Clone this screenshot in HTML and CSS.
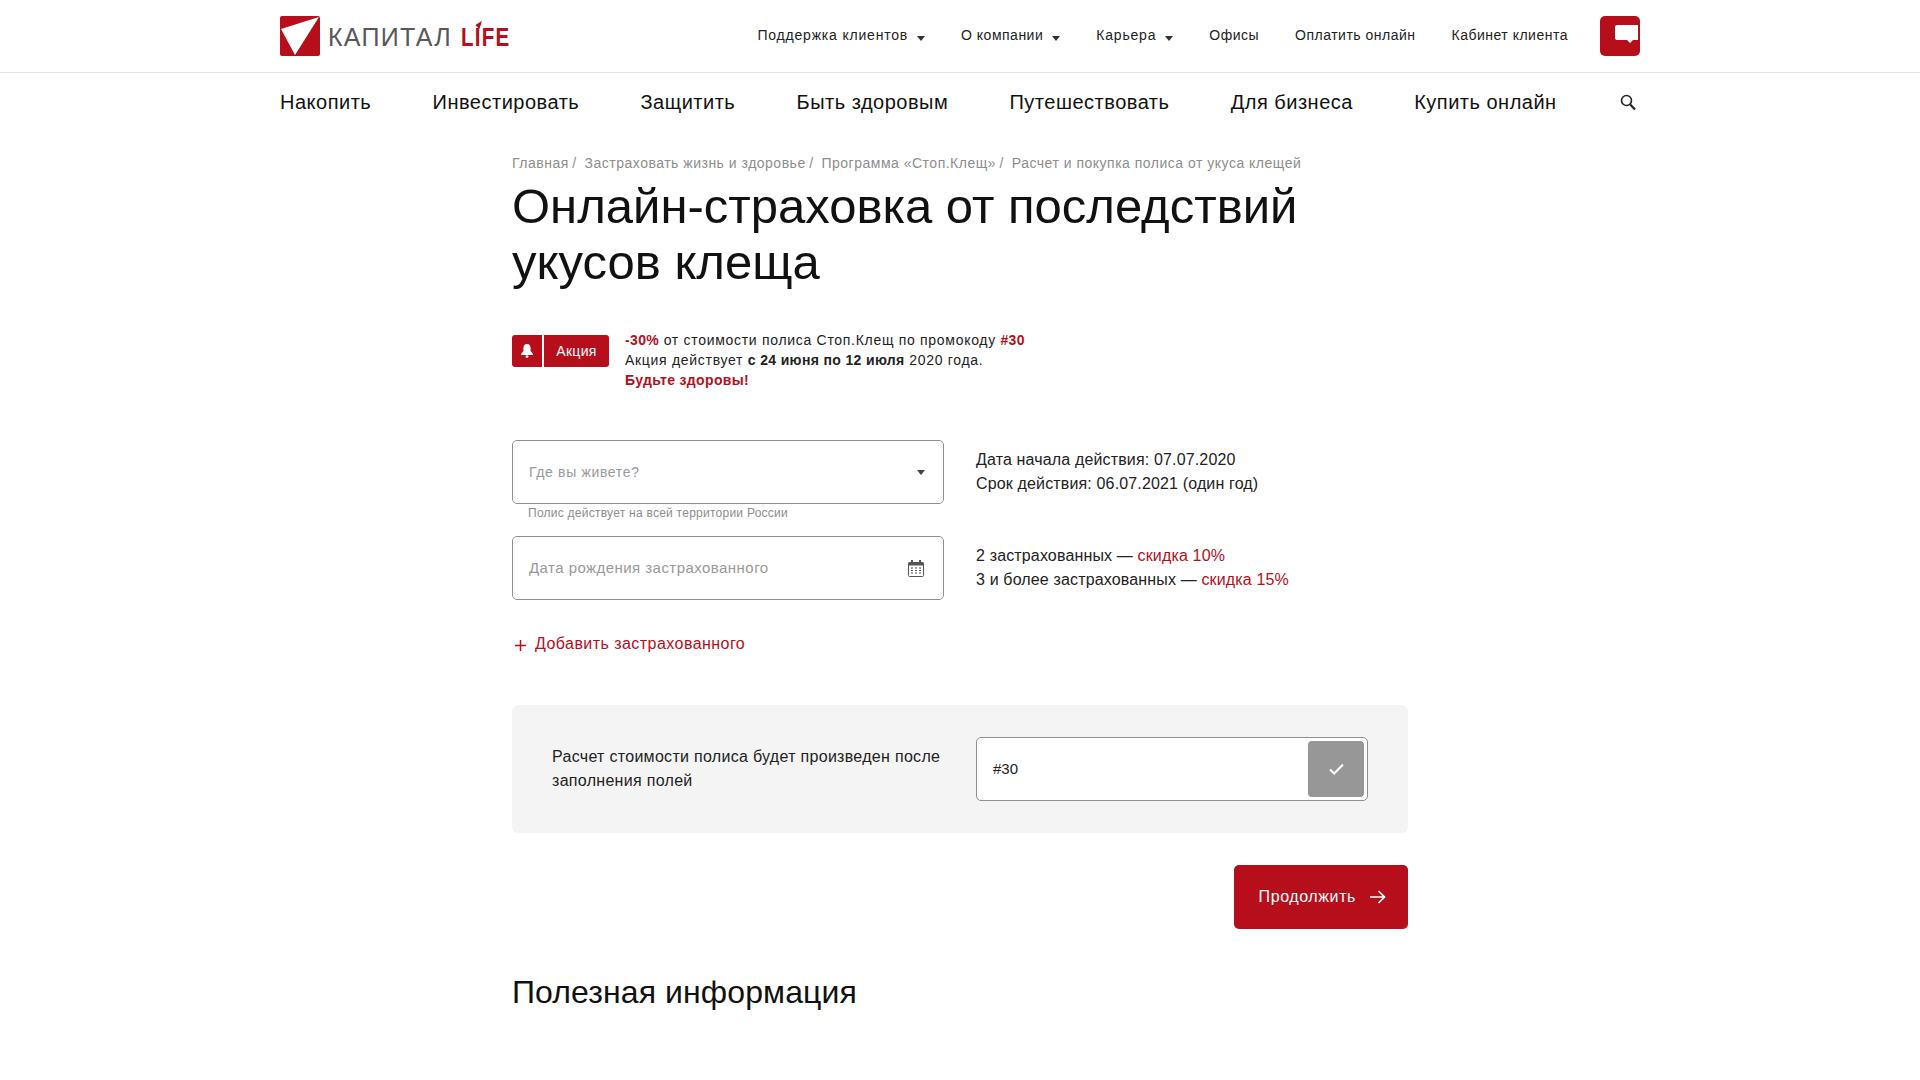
FILE: index.html
```html
<!DOCTYPE html>
<html lang="ru">
    <head>
        <meta charset="UTF-8" />
        <meta name="viewport" content="width=device-width, initial-scale=1.0" />
        <title>Онлайн-страховка от последствий укусов клеща</title>
        <link rel="stylesheet" href="styles.css">
    </head>
    <body>
        <header class="topbar">
            <div class="wrap topbar-row">
                <a class="logo" href="#">
                    <svg class="logo-mark" width="40" height="40" viewBox="0 0 40 40">
                        <rect width="40" height="40" rx="2" fill="#b60e1b" />
                        <path d="M1 13 L39 1 L15 39 Z" fill="#fff" />
                    </svg>
                    <span class="logo-name">КАПИТАЛ</span>
                    <span class="logo-life">L<span class="logo-i">I<svg class="logo-flag" width="9" height="8" viewBox="0 0 8 8"><path d="M0 4 L8 0 L5 8 Z" fill="#b60e1b" /></svg></span>FE</span>
                </a>
                <nav class="topnav">
                    <a href="#" class="has-caret wide">Поддержка клиентов</a>
                    <a href="#" class="has-caret">О компании</a>
                    <a href="#" class="has-caret wide">Карьера</a>
                    <a href="#">Офисы</a>
                    <a href="#">Оплатить онлайн</a>
                    <a href="#">Кабинет клиента</a>
                </nav>
                <a class="chat-btn" href="#">
                    <svg width="23" height="20" viewBox="0 0 23 20">
                        <path d="M2 0 H23 V15 H18 L15 18 L12 15 H2 Q0 15 0 13 V2 Q0 0 2 0 Z" fill="#fff" />
                    </svg>
                </a>
            </div>
        </header>

        <nav class="mainnav">
            <div class="wrap mainnav-row">
                <a href="#">Накопить</a>
                <a href="#">Инвестировать</a>
                <a href="#">Защитить</a>
                <a href="#">Быть здоровым</a>
                <a href="#">Путешествовать</a>
                <a href="#">Для бизнеса</a>
                <a href="#">Купить онлайн</a>
                <a href="#" class="search-link">
                    <svg width="16" height="17" viewBox="0 0 16 17">
                        <circle cx="6.5" cy="6.5" r="5" fill="none" stroke="#222" stroke-width="1.6" />
                        <path d="M10.2 10.5 L15 15.5" stroke="#222" stroke-width="2.2" />
                    </svg>
                </a>
            </div>
        </nav>

        <main class="content">
            <div class="crumbs">
                <a href="#">Главная</a><span>/</span>
                <a href="#">Застраховать жизнь и здоровье</a><span>/</span>
                <a href="#">Программа «Стоп.Клещ»</a><span>/</span>
                <a href="#">Расчет и покупка полиса от укуса клещей</a>
            </div>
            <h1>Онлайн-страховка от последствий укусов клеща</h1>

            <section class="promo">
                <div class="promo-tag">
                    <span class="promo-icon">
                        <svg width="12" height="14" viewBox="0 0 12 14">
                            <path d="M6 0 C8.6 0 9.6 2 9.6 4.5 V7 L12 10 V11 H0 V10 L2.4 7 V4.5 C2.4 2 3.4 0 6 0 Z" fill="#fff" />
                            <circle cx="6" cy="12.6" r="1.4" fill="#fff" />
                        </svg>
                    </span>
                    <span class="promo-label">Акция</span>
                </div>
                <div class="promo-text">
                    <p><b class="red">-30%</b> от стоимости полиса Стоп.Клещ по промокоду <b class="red">#30</b></p>
                    <p>Акция действует <b>с 24 июня по 12 июля</b> 2020 года.</p>
                    <p><b class="red">Будьте здоровы!</b></p>
                </div>
            </section>

            <section class="form-grid">
                <div class="form-col">
                    <div class="field">
                        <span class="placeholder">Где вы живете?</span>
                        <span class="select-caret"></span>
                    </div>
                    <div class="hint">Полис действует на всей территории России</div>
                    <div class="field">
                        <span class="placeholder placeholder-date">Дата рождения застрахованного</span>
                        <svg class="cal-icon" width="16" height="17" viewBox="0 0 16 17">
                            <path d="M1.5 2.5 H14.5 Q15.5 2.5 15.5 3.5 V15.5 Q15.5 16.5 14.5 16.5 H1.5 Q0.5 16.5 0.5 15.5 V3.5 Q0.5 2.5 1.5 2.5 Z" fill="none" stroke="#555" />
                            <rect x="0.5" y="2.5" width="15" height="3" fill="#555" />
                            <rect x="3" y="0" width="2" height="3" fill="#555" />
                            <rect x="11" y="0" width="2" height="3" fill="#555" />
                            <path d="M3 8 h2 M7 8 h2 M11 8 h2 M3 10.5 h2 M7 10.5 h2 M11 10.5 h2 M3 13 h2 M7 13 h2 M11 13 h2" stroke="#555" stroke-width="1.2" />
                        </svg>
                    </div>
                    <a class="add-link" href="#">
                        <svg width="13" height="13" viewBox="0 0 13 13">
                            <path d="M6.5 1 V12 M1 6.5 H12" stroke="#b60e1b" stroke-width="1.5" />
                        </svg>
                        Добавить застрахованного
                    </a>
                </div>
                <div class="info-col">
                    <p>Дата начала действия: 07.07.2020</p>
                    <p>Срок действия: 06.07.2021 (один год)</p>
                    <p class="info-gap">2 застрахованных — <span class="red">скидка 10%</span></p>
                    <p>3 и более застрахованных — <span class="red">скидка 15%</span></p>
                </div>
            </section>

            <section class="calc">
                <p class="calc-note">Расчет стоимости полиса будет произведен после заполнения полей</p>
                <div class="promo-field">
                    <span class="promo-value">#30</span>
                    <button class="promo-apply" type="button">
                        <svg width="15" height="12" viewBox="0 0 15 12">
                            <path d="M1 6.5 L5.2 10.5 L14 1.5" fill="none" stroke="#fff" stroke-width="2" />
                        </svg>
                    </button>
                </div>
            </section>

            <div class="actions">
                <button class="next-btn" type="button">
                    Продолжить
                    <svg width="16" height="14" viewBox="0 0 16 14">
                        <path d="M0 7 H14 M8.5 1 L14.5 7 L8.5 13" fill="none" stroke="#fff" stroke-width="1.7" />
                    </svg>
                </button>
            </div>

            <h2>Полезная информация</h2>
        </main>
    </body>
</html>
```

FILE: styles.css
```css
body {
    font-family: "Liberation Sans", Arial, sans-serif;
    margin: 0;
    padding: 0;
    background-color: #fff;
    color: #222;
}

a {
    color: inherit;
    text-decoration: none;
}

p {
    margin: 0;
}

.red {
    color: #b60e1b;
}

.wrap {
    width: 1360px;
    margin: 0 auto;
}

/* top bar */
.topbar {
    height: 72px;
    border-bottom: 1px solid #e4e4e4;
}

.topbar-row {
    display: flex;
    align-items: center;
    height: 72px;
}

.logo {
    display: flex;
    align-items: center;
}

.logo-mark {
    margin-right: 8px;
}

.logo-name {
    font-size: 25px;
    letter-spacing: 1.3px;
    color: #58585a;
    margin-right: 9px;
    margin-top: 3px;
}

.logo-life {
    font-size: 25px;
    font-weight: bold;
    color: #b60e1b;
    margin-top: 3px;
    letter-spacing: 1.5px;
    transform: scaleX(0.82);
    transform-origin: left center;
}

.logo-i {
    position: relative;
}

.logo-flag {
    position: absolute;
    left: 0;
    top: -2px;
}

.topnav {
    display: flex;
    margin-left: auto;
    margin-top: -2px;
    gap: 36px;
    font-size: 14px;
    letter-spacing: 0.5px;
}

.topnav .wide {
    letter-spacing: 0.8px;
}

.has-caret::after {
    content: "";
    display: inline-block;
    margin-left: 9px;
    vertical-align: -1px;
    border-left: 4px solid transparent;
    border-right: 4px solid transparent;
    border-top: 5px solid #333;
}

.chat-btn {
    display: flex;
    align-items: flex-start;
    width: 40px;
    height: 40px;
    margin-left: 32px;
    background-color: #b60e1b;
    border-radius: 5px;
}

.chat-btn svg {
    margin-left: 15px;
    margin-top: 9px;
}

/* main menu */
.mainnav-row {
    display: flex;
    justify-content: space-between;
    align-items: center;
    height: 58px;
    font-size: 20px;
    letter-spacing: 0.5px;
    color: #111;
}

.search-link {
    display: flex;
    margin-left: 2px;
    margin-right: 4px;
}

/* content */
.content {
    width: 896px;
    margin: 0 auto;
}

.crumbs {
    margin-top: 22px;
    margin-bottom: 5px;
    font-size: 14px;
    line-height: 20px;
    letter-spacing: 0.5px;
    color: #8d8d8d;
}

.crumbs span {
    margin: 0 3.5px;
}

h1 {
    margin: 0;
    max-width: 800px;
    font-size: 49px;
    line-height: 56px;
    font-weight: normal;
    color: #111;
}

.promo {
    display: flex;
    margin-top: 40px;
}

.promo-tag {
    display: flex;
    gap: 2px;
    height: 32px;
    margin-top: 5px;
    margin-right: 16px;
    color: #fff;
    font-size: 14px;
    letter-spacing: 0.3px;
}

.promo-icon {
    display: flex;
    align-items: center;
    justify-content: center;
    width: 30px;
    background-color: #b60e1b;
    border-radius: 3px 0 0 3px;
}

.promo-label {
    display: flex;
    align-items: center;
    justify-content: center;
    width: 65px;
    padding-bottom: 1px;
    box-sizing: border-box;
    background-color: #b60e1b;
    border-radius: 0 3px 3px 0;
}

.promo-text {
    font-size: 14px;
    line-height: 20px;
    letter-spacing: 0.7px;
}

.promo-text b {
    letter-spacing: 0.35px;
}

.form-grid {
    display: flex;
    margin-top: 50px;
}

.form-col {
    width: 432px;
    margin-right: 32px;
}

.field {
    position: relative;
    display: flex;
    align-items: center;
    justify-content: space-between;
    box-sizing: border-box;
    height: 64px;
    padding: 0 16px;
    border: 1px solid #8f8f8f;
    border-radius: 5px;
    font-size: 14px;
    letter-spacing: 0.65px;
}

.placeholder {
    color: #999;
}

.placeholder-date {
    padding-bottom: 2px;
    font-size: 15px;
    letter-spacing: 0.45px;
}

.select-caret {
    margin-right: 2px;
    border-left: 4px solid transparent;
    border-right: 4px solid transparent;
    border-top: 5px solid #444;
}

.hint {
    height: 32px;
    padding: 2px 16px 0;
    box-sizing: border-box;
    font-size: 12px;
    letter-spacing: 0.25px;
    color: #8d8d8d;
}

.cal-icon {
    margin-right: 3px;
}

.add-link {
    display: flex;
    align-items: center;
    gap: 8px;
    margin-top: 32px;
    font-size: 16px;
    line-height: 24px;
    letter-spacing: 0.45px;
    color: #b60e1b;
}

.add-link svg {
    margin-left: 2px;
    margin-top: 3px;
}

.info-col {
    padding-top: 8px;
    font-size: 16px;
    line-height: 24px;
    letter-spacing: 0.15px;
}

.info-gap {
    margin-top: 48px;
}

.calc {
    display: flex;
    align-items: center;
    height: 128px;
    margin-top: 49px;
    padding: 0 40px;
    box-sizing: border-box;
    background-color: #f4f4f4;
    border-radius: 6px;
}

.calc-note {
    width: 392px;
    margin-right: 32px;
    font-size: 16px;
    line-height: 24px;
    letter-spacing: 0.3px;
}

.promo-field {
    display: flex;
    align-items: center;
    justify-content: space-between;
    box-sizing: border-box;
    width: 392px;
    height: 64px;
    padding: 0 3px 0 16px;
    background-color: #fff;
    border: 1px solid #8f8f8f;
    border-radius: 5px;
    font-size: 15px;
}

.promo-value {
    padding-bottom: 2px;
}

.promo-apply {
    display: flex;
    align-items: center;
    justify-content: center;
    width: 56px;
    height: 56px;
    padding: 0;
    border: none;
    border-radius: 4px;
    background-color: #979797;
}

.actions {
    display: flex;
    justify-content: flex-end;
    margin-top: 32px;
}

.next-btn {
    display: flex;
    align-items: center;
    gap: 14px;
    height: 64px;
    padding: 0 22px 0 25px;
    border: none;
    border-radius: 5px;
    background-color: #b60e1b;
    color: #fff;
    font-family: inherit;
    font-size: 16px;
    letter-spacing: 0.6px;
}

h2 {
    margin: 43px 0 0;
    font-size: 32px;
    line-height: 40px;
    font-weight: normal;
    letter-spacing: 0.1px;
    color: #111;
}
```
